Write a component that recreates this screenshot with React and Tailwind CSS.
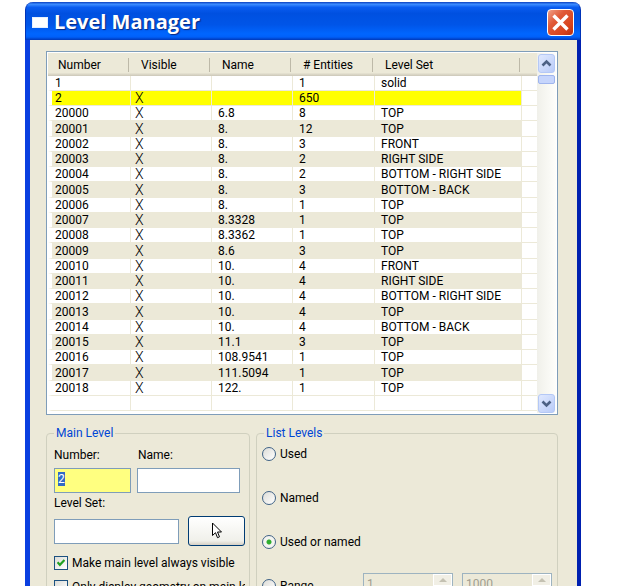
import React, { useEffect, useRef } from "react";

const levels = [
  { number: "1", visible: "", name: "", entities: "1", set: "solid" },
  { number: "2", visible: "X", name: "", entities: "650", set: "", main: true },
  { number: "20000", visible: "X", name: "6.8", entities: "8", set: "TOP" },
  { number: "20001", visible: "X", name: "8.", entities: "12", set: "TOP" },
  { number: "20002", visible: "X", name: "8.", entities: "3", set: "FRONT" },
  { number: "20003", visible: "X", name: "8.", entities: "2", set: "RIGHT SIDE" },
  { number: "20004", visible: "X", name: "8.", entities: "2", set: "BOTTOM - RIGHT SIDE" },
  { number: "20005", visible: "X", name: "8.", entities: "3", set: "BOTTOM - BACK" },
  { number: "20006", visible: "X", name: "8.", entities: "1", set: "TOP" },
  { number: "20007", visible: "X", name: "8.3328", entities: "1", set: "TOP" },
  { number: "20008", visible: "X", name: "8.3362", entities: "1", set: "TOP" },
  { number: "20009", visible: "X", name: "8.6", entities: "3", set: "TOP" },
  { number: "20010", visible: "X", name: "10.", entities: "4", set: "FRONT" },
  { number: "20011", visible: "X", name: "10.", entities: "4", set: "RIGHT SIDE" },
  { number: "20012", visible: "X", name: "10.", entities: "4", set: "BOTTOM - RIGHT SIDE" },
  { number: "20013", visible: "X", name: "10.", entities: "4", set: "TOP" },
  { number: "20014", visible: "X", name: "10.", entities: "4", set: "BOTTOM - BACK" },
  { number: "20015", visible: "X", name: "11.1", entities: "3", set: "TOP" },
  { number: "20016", visible: "X", name: "108.9541", entities: "1", set: "TOP" },
  { number: "20017", visible: "X", name: "111.5094", entities: "1", set: "TOP" },
  { number: "20018", visible: "X", name: "122.", entities: "1", set: "TOP" },
  { number: "", visible: "", name: "", entities: "", set: "" },
];

const columns = ["Number", "Visible", "Name", "# Entities", "Level Set"];

const TitleBar = () => (
  <header className="flex h-[38px] items-center gap-[6px] rounded-t-lg border-x border-[#0034b8] bg-[linear-gradient(180deg,#0a3fc0_0%,#3c8cff_6%,#0a5cf0_14%,#0050e0_30%,#0055e8_60%,#0066ff_84%,#0060fa_92%,#0038b8_100%)] pt-[2px] pr-[6px] pl-[6px]">
    <span className="h-[11px] w-4 border border-[#e6f0ff] bg-white" />
    <h1 className="flex-1 font-['Open_Sans',sans-serif] text-[20px] leading-6 font-bold text-white [text-shadow:1px_1px_1px_#0a2a80]">
      Level Manager
    </h1>
    <button
      aria-label="Close"
      className="flex h-[27px] w-[27px] items-center justify-center rounded-[4px] border border-white bg-[linear-gradient(135deg,#f0a088_0%,#e05a38_35%,#d8431c_75%,#b83010_100%)]"
    >
      <svg width="17" height="17" viewBox="0 0 17 17" fill="none" stroke="#fff" strokeWidth="3.4">
        <path d="M1.5 1.5l14 14M15.5 1.5l-14 14" />
      </svg>
    </button>
  </header>
);

const LevelTable = () => (
  <table className="flex-1 table-fixed border-separate border-spacing-0 self-start bg-white">
    <colgroup>
      <col className="w-[83px]" />
      <col className="w-[81px]" />
      <col className="w-[81px]" />
      <col className="w-[82px]" />
      <col />
      <col className="w-[15px]" />
    </colgroup>
    <thead>
      <tr className="h-[23px] bg-[linear-gradient(180deg,#ece9d8_85%,#cbc7b8_100%)]">
        {columns.map((c) => (
          <th key={c} className="p-0 text-left font-normal">
            <div className="mr-[2px] flex h-[14px] items-center border-r border-[#bdb9a8] pl-[10px] leading-[14px] whitespace-nowrap">
              {c}
            </div>
          </th>
        ))}
        <th className="p-0" />
      </tr>
    </thead>
    <tbody>
      {levels.map((l, i) => (
        <tr
          key={i}
          className={`h-[15px] leading-[14px] whitespace-nowrap nth-[4n]:h-4 ${
            l.main ? "bg-[#ffff00]" : i > 2 && i % 2 === 1 && l.number ? "bg-[#ece9d8]" : "bg-white"
          }`}
        >
          <td className="border-r border-b border-l-4 border-[#ece9d8] border-l-white py-0 pl-[3px]">{l.number}</td>
          <td className="border-r border-b border-[#ece9d8] py-0 pl-1 text-[14px] leading-[14px] font-light">{l.visible}</td>
          <td className="border-r border-b border-[#ece9d8] py-0 pl-[6px]">{l.name}</td>
          <td className="border-r border-b border-[#ece9d8] py-0 pl-[6px]">{l.entities}</td>
          <td className="border-r border-b border-[#ece9d8] py-0 pl-[6px]">{l.set}</td>
          <td className="border-b border-[#ece9d8] bg-white p-0" />
        </tr>
      ))}
    </tbody>
  </table>
);

const ScrollButton = ({ label, d }) => (
  <button
    aria-label={label}
    className="flex h-[19px] w-full items-center justify-center rounded-[3px] border border-[#b4c8f6] bg-[linear-gradient(135deg,#e0e9ff,#b9cbf8)]"
  >
    <svg width="11" height="9" viewBox="0 0 11 9" fill="none" stroke="#4d6185" strokeWidth="2.6">
      <path d={d} />
    </svg>
  </button>
);

const ScrollBar = () => (
  <div className="flex w-[19px] flex-col bg-[linear-gradient(90deg,#f0f0ea,#fefefb)] px-px pt-px">
    <ScrollButton label="Scroll up" d="M1.5 6.5l4-4 4 4" />
    <div className="mt-[2px] h-[9px] rounded-[2px] border border-[#9fb5ee] bg-[#c6d5fc]" />
    <div className="flex-1" />
    <ScrollButton label="Scroll down" d="M1.5 2.5l4 4 4-4" />
  </div>
);

const Group = ({ title, children }) => (
  <fieldset className="min-w-0 rounded-[4px] border border-[#d0d0bf] px-[7px]">
    <legend className="px-[2px] leading-4 text-[#0046d5]">{title}</legend>
    {children}
  </fieldset>
);

const CheckBox = ({ label, checked }) => (
  <label className="flex h-6 items-center gap-1 overflow-hidden whitespace-nowrap">
    <span className="grid shrink-0">
      <input
        type="checkbox"
        defaultChecked={checked}
        className="peer col-start-1 row-start-1 h-[14px] w-[14px] appearance-none border border-[#1c5180] bg-[linear-gradient(135deg,#dcdcd7,#ffffff)]"
      />
      <svg
        className="invisible col-start-1 row-start-1 place-self-center peer-checked:visible"
        width="8"
        height="8"
        viewBox="0 0 8 8"
        fill="none"
        stroke="#21a121"
        strokeWidth="2.2"
      >
        <path d="M0.5 3.2l2.4 2.6L7.5 1" />
      </svg>
    </span>
    {label}
  </label>
);

const Radio = ({ label, checked }) => (
  <label className="flex items-center gap-1">
    <input
      type="radio"
      name="list-levels"
      defaultChecked={checked}
      className="h-[14px] w-[14px] appearance-none rounded-full border border-[#3f6286] bg-[linear-gradient(135deg,#dcdcd7,#ffffff)] checked:bg-[radial-gradient(circle,#2fae2f_0,#2fae2f_2px,#f4f4f0_3px)]"
    />
    {label}
  </label>
);

const Spinner = ({ label, value }) => (
  <div className="flex h-[25px] min-w-0 flex-1 border border-[#9db3c0]">
    <input
      aria-label={label}
      disabled
      defaultValue={value}
      className="w-0 min-w-0 flex-1 bg-[#ece9d8] pb-1 pl-[3px] text-[#a09e90]"
    />
    <div className="flex w-[19px] flex-col">
      {["M0 4l4-4 4 4z", "M0 0l4 4 4-4z"].map((d, i) => (
        <button
          key={d}
          disabled
          aria-label={`${label} ${i ? "down" : "up"}`}
          className="flex flex-1 items-center justify-center border border-white bg-[#f1efe5]"
        >
          <svg width="8" height="4" viewBox="0 0 8 4" fill="#c4c1b2">
            <path d={d} />
          </svg>
        </button>
      ))}
    </div>
  </div>
);

const MainLevel = () => {
  const numberRef = useRef(null);

  // number field starts focused with its text selected
  useEffect(() => {
    numberRef.current?.focus();
    numberRef.current?.select();
  }, []);

  return (
    <Group title="Main Level">
      <div className="flex gap-[6px] pt-[6px]">
        <div className="w-[77px]">
          <label htmlFor="number" className="block h-[21px] leading-4">Number:</label>
          <input
            id="number"
            ref={numberRef}
            defaultValue="2"
            className="block h-[25px] w-full border border-[#7f9db9] bg-[#ffff80] pb-1 pl-[3px] outline-none selection:bg-[#316ac5] selection:text-white"
          />
        </div>
        <div className="w-[103px]">
          <label htmlFor="name" className="block h-[21px] pl-px leading-4">Name:</label>
          <input id="name" className="block h-[25px] w-full border border-[#7f9db9] bg-white pl-[3px]" />
        </div>
      </div>
      <label htmlFor="level-set" className="mt-[2px] block h-[21px] leading-4">Level Set:</label>
      <div className="flex h-[30px] items-center justify-between">
        <input id="level-set" className="h-[25px] w-[125px] border border-[#7f9db9] bg-white pl-[3px]" />
        <button
          aria-label="Select level from geometry"
          className="-mr-[3px] flex h-[30px] w-[57px] items-center justify-center rounded-[3px] border border-[#003c74] bg-[linear-gradient(180deg,#ffffff,#f0f0ea_85%,#d6d0c5)]"
        >
          <svg width="12" height="18" viewBox="0 0 12 18" fill="#fff" stroke="#000" strokeWidth="1">
            <path d="M1.5 1v12.5l3-2.8 2 5 2-0.9-2-4.8h4z" />
          </svg>
        </button>
      </div>
      <div className="-mr-[3px] pt-[5px] pb-3">
        <CheckBox label="Make main level always visible" checked />
        <CheckBox label="Only display geometry on main level" />
      </div>
    </Group>
  );
};

const ListLevels = () => (
  <Group title="List Levels">
    <div className="-mx-[2px] grid auto-rows-[25px] gap-[19px] pb-3">
      <Radio label="Used" />
      <Radio label="Named" />
      <Radio label="Used or named" checked />
      <div className="flex gap-[9px]">
        <div className="flex w-[92px] items-center">
          <Radio label="Range" />
        </div>
        <Spinner label="Range start" value="1" />
        <Spinner label="Range end" value="1000" />
      </div>
    </div>
  </Group>
);

const App = () => {
  return (
    <main className="h-screen overflow-hidden bg-white pt-[2px] pr-[53px] pl-[25px] font-[Roboto,'Liberation_Sans',sans-serif] text-[12px] text-black">
      <TitleBar />
      <div className="border-r-4 border-l-[5px] border-r-[#0020b0] border-l-[#0a3fe0] bg-[#ece9d8] pt-[11px] pr-[19px] pb-6 pl-4">
        <div className="flex h-[364px] overflow-hidden border border-[#7f9db9] bg-white p-px">
          <LevelTable />
          <ScrollBar />
        </div>
        <div className="mt-[10px] grid grid-cols-[204px_1fr] gap-[6px]">
          <MainLevel />
          <ListLevels />
        </div>
      </div>
    </main>
  );
};

export default App;
